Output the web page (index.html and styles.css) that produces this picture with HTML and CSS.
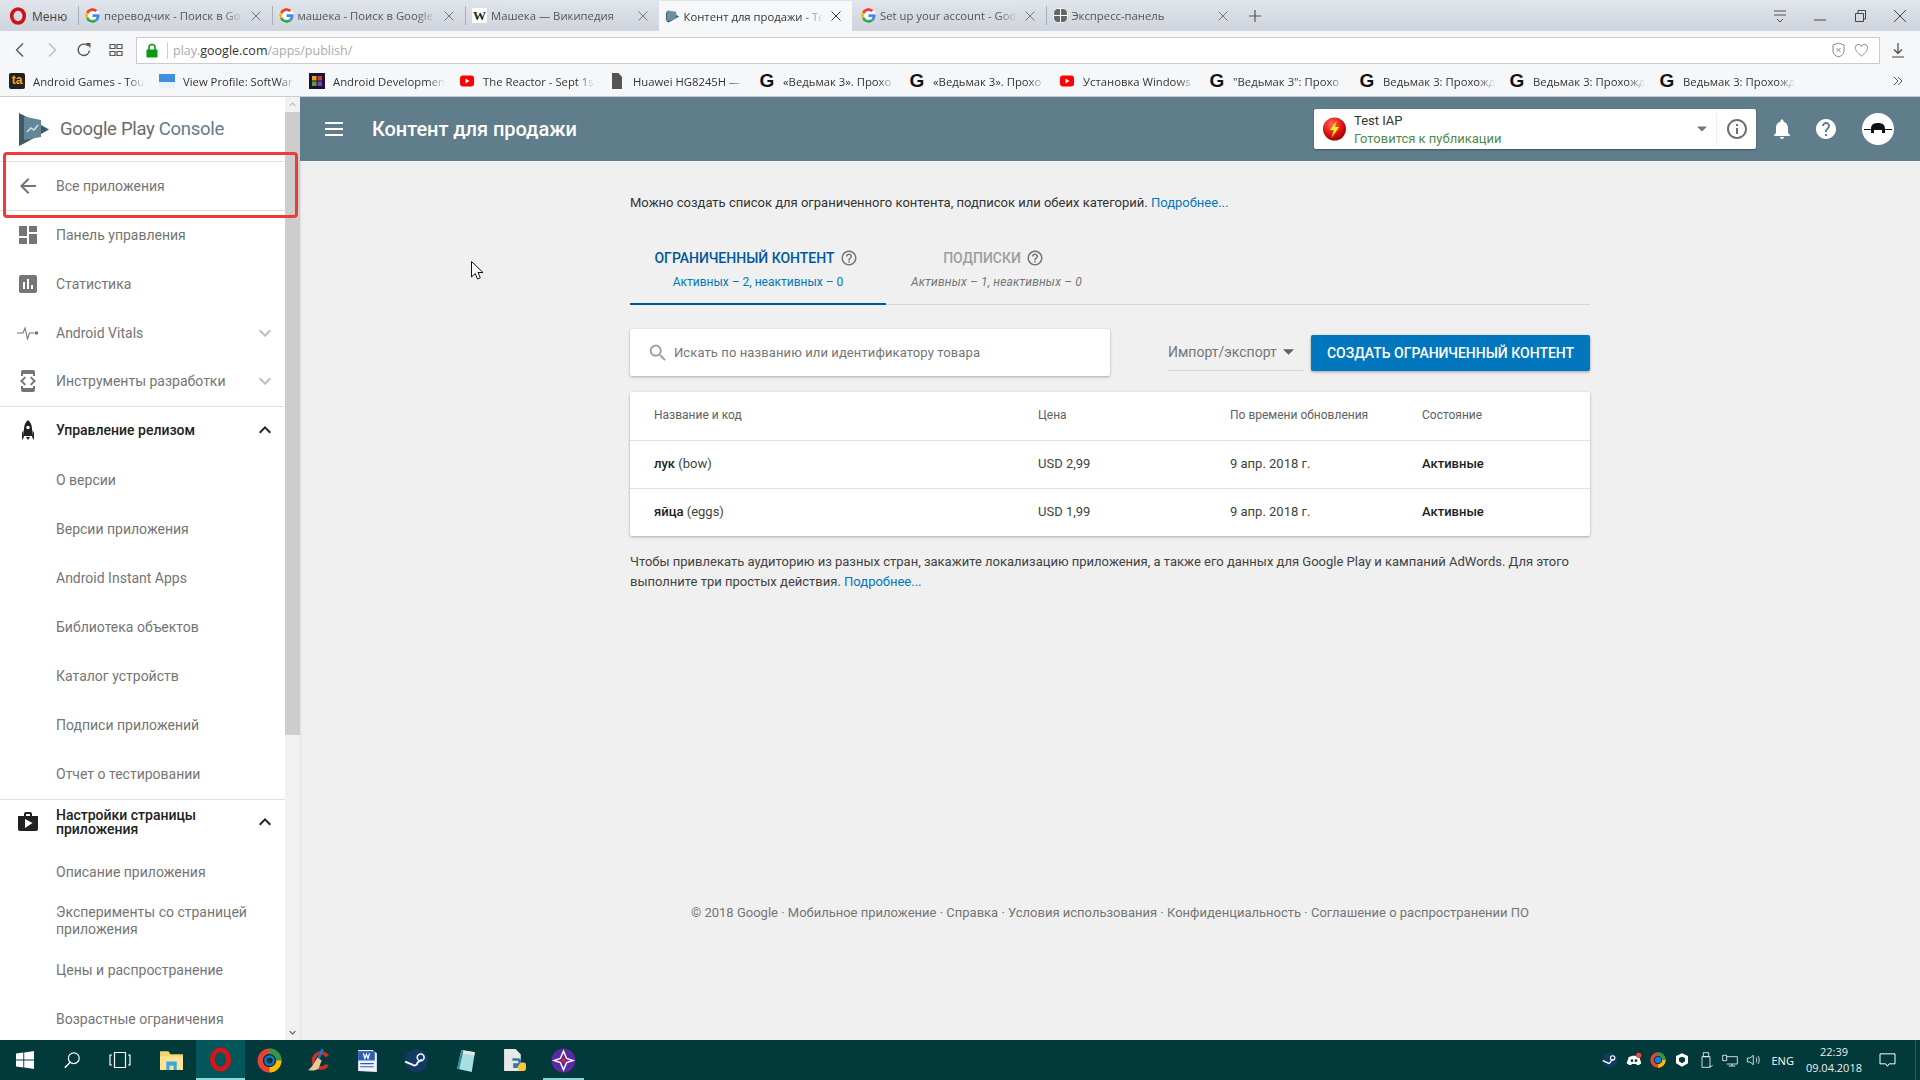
FILE: index.html
```html
<!DOCTYPE html>
<html lang="ru">
<head>
<meta charset="utf-8">
<title>Контент для продажи</title>
<link rel="stylesheet" href="styles.css">
</head>
<body>
<svg class="defs" aria-hidden="true">
  <symbol id="g" viewBox="0 0 48 48">
    <path fill="#EA4335" d="M24 9.5c3.54 0 6.71 1.22 9.21 3.6l6.85-6.85C35.9 2.38 30.47 0 24 0 14.62 0 6.51 5.38 2.56 13.22l7.98 6.19C12.43 13.72 17.74 9.5 24 9.5z"/>
    <path fill="#4285F4" d="M46.98 24.55c0-1.57-.15-3.09-.38-4.55H24v9.02h12.94c-.58 2.96-2.26 5.48-4.78 7.18l7.73 6c4.51-4.18 7.09-10.36 7.09-17.65z"/>
    <path fill="#FBBC05" d="M10.53 28.59c-.48-1.45-.76-2.99-.76-4.59s.27-3.14.76-4.59l-7.98-6.19C.92 16.46 0 20.12 0 24c0 3.88.92 7.54 2.56 10.78l7.97-6.19z"/>
    <path fill="#34A853" d="M24 48c6.48 0 11.93-2.13 15.89-5.81l-7.73-6c-2.15 1.45-4.92 2.3-8.16 2.3-6.26 0-11.57-4.22-13.47-9.91l-7.98 6.19C6.51 42.62 14.62 48 24 48z"/>
  </symbol>
  <symbol id="x" viewBox="0 0 12 12"><path d="M1.5 1.5l9 9M10.5 1.5l-9 9" fill="none" stroke="currentColor" stroke-width="1"/></symbol>
  <symbol id="yt" viewBox="0 0 16 16"><rect x="1" y="2.5" width="14" height="11" rx="3" fill="#f00"/><path d="M6.5 5.5l4 2.5-4 2.5z" fill="#fff"/></symbol>
  <symbol id="help-o" viewBox="0 0 24 24"><path fill="currentColor" d="M11 18h2v-2h-2v2zm1-16C6.48 2 2 6.48 2 12s4.48 10 10 10 10-4.48 10-10S17.52 2 12 2zm0 18c-4.41 0-8-3.59-8-8s3.59-8 8-8 8 3.59 8 8-3.59 8-8 8zm0-14c-2.21 0-4 1.79-4 4h2c0-1.1.9-2 2-2s2 .9 2 2c0 2-3 1.75-3 5h2c0-2.25 3-2.5 3-5 0-2.21-1.79-4-4-4z"/></symbol>
  <symbol id="more" viewBox="0 0 24 24"><path fill="currentColor" d="M16.59 8.59L12 13.17 7.41 8.59 6 10l6 6 6-6z"/></symbol>
  <symbol id="less" viewBox="0 0 24 24"><path fill="currentColor" d="M12 8l-6 6 1.41 1.41L12 10.83l4.59 4.58L18 14z"/></symbol>
  <symbol id="caret" viewBox="0 0 12 6"><path fill="currentColor" d="M0 0h12L6 6z"/></symbol>
</svg>

<div class="tabbar">
  <div class="menu">
    <svg class="opera-s" viewBox="0 0 16 16"><ellipse cx="8" cy="8" rx="5.6" ry="6.2" fill="none" stroke="#d0121b" stroke-width="3.2"/></svg>
    <span>Меню</span>
  </div>
  <div class="tab"><svg class="fav"><use href="#g"/></svg><span class="tab-l">переводчик - Поиск в Go</span><svg class="tab-x"><use href="#x"/></svg></div>
  <div class="tab"><svg class="fav"><use href="#g"/></svg><span class="tab-l">машека - Поиск в Google</span><svg class="tab-x"><use href="#x"/></svg></div>
  <div class="tab"><span class="wiki">W</span><span class="tab-l">Машека — Википедия</span><svg class="tab-x"><use href="#x"/></svg></div>
  <div class="tab active"><svg class="fav" viewBox="0 0 16 16"><path d="M1 0l14 8-14 8z" fill="#3e5866"/><path d="M2 1.500l10 1.500v7l-10 3z" fill="#6b8fa0"/></svg><span class="tab-l">Контент для продажи - Te</span><svg class="tab-x"><use href="#x"/></svg></div>
  <div class="tab after-active"><svg class="fav"><use href="#g"/></svg><span class="tab-l">Set up your account - Goo</span><svg class="tab-x"><use href="#x"/></svg></div>
  <div class="tab"><svg class="fav" viewBox="0 0 14 14"><path d="M1 1h5.5v5.5H1zM7.5 1H13v5.5H7.5zM1 7.5h5.5V13H1zM7.5 7.5H13V13H7.5z" fill="#666"/></svg><span class="tab-l">Экспресс-панель</span><svg class="tab-x"><use href="#x"/></svg></div>
  <svg class="plus" viewBox="0 0 12 12"><path d="M6 0v12M0 6h12" stroke="#555" stroke-width="1.2"/></svg>
  <div class="winctl">
    <svg class="wc" viewBox="0 0 14 14"><path d="M1 2h12M1 6h12M4 10l3 3 3-3" fill="none" stroke="#555"/></svg>
    <svg class="wc" viewBox="0 0 14 14"><path d="M1 11h12" stroke="#444"/></svg>
    <svg class="wc" viewBox="0 0 14 14"><path d="M2.5 4.5h8v8h-8zM5 4V1.5h7.5V10H11" fill="none" stroke="#444"/></svg>
    <svg class="wc" viewBox="0 0 14 14"><path d="M1 1l12 12M13 1L1 13" stroke="#444"/></svg>
  </div>
</div>

<div class="addr">
  <svg class="nav" viewBox="0 0 16 16"><path d="M11 1.500L4.500 8l6.500 6.500" fill="none" stroke="#555" stroke-width="1.300"/></svg>
  <svg class="nav" viewBox="0 0 16 16"><path d="M5 1.500L11.500 8 5 14.500" fill="none" stroke="#bbb" stroke-width="1.300"/></svg>
  <svg class="nav" viewBox="0 0 16 16"><path d="M13.500 8.500A5.700 5.700 0 1 1 11.800 3.700" fill="none" stroke="#555" stroke-width="1.400"/><path d="M9.500 1h5v5z" fill="#555"/></svg>
  <svg class="nav" viewBox="0 0 16 16"><path d="M2 2.500h5v4H2zM9 2.500h5v4H9zM2 9.500h5v4H2zM9 9.500h5v4H9z" fill="none" stroke="#555" stroke-width="1.200"/></svg>
  <div class="urlbox">
    <svg class="lock" viewBox="0 0 12 15"><path d="M3 7V4.500a3 3 0 0 1 6 0V7" fill="none" stroke="#0a9a12" stroke-width="1.600"/><rect x="0.500" y="6.500" width="11" height="8" fill="#0a9a12"/></svg>
    <span class="urlsep"></span>
    <span class="url">play.<b>google.com</b>/apps/publish/</span>
    <svg class="urli shield" viewBox="0 0 14 16"><path d="M7 1l5.500 2v6c0 3-2.500 5-5.500 6-3-1-5.500-3-5.500-6V3z" fill="none" stroke="#888"/><path d="M5 6l4 4M9 6l-4 4" stroke="#888"/></svg>
    <svg class="urli heart" viewBox="0 0 16 16"><path d="M8 14.500C3 10.500 1.500 8 1.500 5.500a3.300 3.300 0 0 1 6.500-1 3.300 3.300 0 0 1 6.500 1c0 2.500-1.500 5-6.500 9z" fill="none" stroke="#888"/></svg>
  </div>
  <svg class="dl" viewBox="0 0 14 16"><path d="M7 1v10M3 7.500l4 4 4-4M1 15h12" fill="none" stroke="#444" stroke-width="1.200"/></svg>
</div>

<div class="bookmarks">
  <div class="bm"><span class="ic-ta">ta</span><span class="bm-l">Android Games - Tou</span></div>
  <div class="bm"><svg class="bmi" viewBox="0 0 16 16"><rect y="1" width="16" height="14" fill="#3f8fe0"/><rect y="9" width="16" height="6" fill="#e8f2fb"/></svg><span class="bm-l">View Profile: SoftWar</span></div>
  <div class="bm"><svg class="bmi" viewBox="0 0 16 16"><rect width="16" height="16" fill="#14143c"/><rect x="3" y="3" width="4.500" height="4.500" fill="#e7a31e"/><rect x="8.500" y="3" width="4.500" height="4.500" fill="#d23a2b"/><rect x="3" y="8.500" width="4.500" height="4.500" fill="#5aa02c"/><rect x="8.500" y="8.500" width="4.500" height="4.500" fill="#7b3fb0"/></svg><span class="bm-l">Android Developmen</span></div>
  <div class="bm"><svg class="bmi"><use href="#yt"/></svg><span class="bm-l">The Reactor - Sept 1s</span></div>
  <div class="bm"><svg class="bmi" viewBox="0 0 16 16"><path d="M3 0h6.500L13 4v12H3z" fill="#555"/></svg><span class="bm-l">Huawei HG8245H —</span></div>
  <div class="bm"><span class="ic-g">G</span><span class="bm-l">«Ведьмак 3». Прохо</span></div>
  <div class="bm"><span class="ic-g">G</span><span class="bm-l">«Ведьмак 3». Прохо</span></div>
  <div class="bm"><svg class="bmi"><use href="#yt"/></svg><span class="bm-l">Установка Windows</span></div>
  <div class="bm"><span class="ic-g">G</span><span class="bm-l">"Ведьмак 3": Прохо</span></div>
  <div class="bm"><span class="ic-g">G</span><span class="bm-l">Ведьмак 3: Прохожд</span></div>
  <div class="bm"><span class="ic-g">G</span><span class="bm-l">Ведьмак 3: Прохожд</span></div>
  <div class="bm"><span class="ic-g">G</span><span class="bm-l">Ведьмак 3: Прохожд</span></div>
  <svg class="chev" viewBox="0 0 10 10"><path d="M1 1l4 4-4 4M5 1l4 4-4 4" fill="none" stroke="#555"/></svg>
</div>

<div class="app">
  <aside class="sidebar">
    <div class="logo">
      <svg class="logo-i" viewBox="0 0 30 33"><path d="M0 0l6 3 24 13.500L6 30l-6 3z" fill="#3e5866"/><path d="M5 3.500l17 3.500v17L5 27z" fill="#648797"/><path d="M8 19l4-4 3 2 4-5" fill="none" stroke="#d3e0e6" stroke-width="1.500"/></svg>
      <span class="logo-t">Google Play <em>Console</em></span>
    </div>
    <div class="row back">
      <svg class="ri" viewBox="0 0 24 24"><path fill="#757575" d="M20 11H7.830l5.590-5.590L12 4l-8 8 8 8 1.410-1.410L7.830 13H20v-2z"/></svg>
      <span class="rt">Все приложения</span>
    </div>
    <div class="row top">
      <svg class="ri" viewBox="0 0 24 24"><path fill="#757575" d="M3 13h8V3H3v10zm0 8h8v-6H3v6zm10 0h8V11h-8v10zm0-18v6h8V3h-8z"/></svg>
      <span class="rt">Панель управления</span>
    </div>
    <div class="row top">
      <svg class="ri" viewBox="0 0 24 24"><path fill="#757575" d="M19 3H5c-1.100 0-2 .9-2 2v14c0 1.100.9 2 2 2h14c1.100 0 2-.9 2-2V5c0-1.100-.9-2-2-2zM9 17H7v-7h2v7zm4 0h-2V7h2v10zm4 0h-2v-4h2v4z"/></svg>
      <span class="rt">Статистика</span>
    </div>
    <div class="row top">
      <svg class="ri" viewBox="0 0 24 24"><path d="M1 12h6l2-5 2.500 11 2-6h5" fill="none" stroke="#757575" stroke-width="1.100"/><circle cx="20.500" cy="12" r="1.800" fill="#757575"/></svg>
      <span class="rt">Android Vitals</span>
      <svg class="ra dim"><use href="#more"/></svg>
    </div>
    <div class="row top">
      <svg class="ri" viewBox="0 0 24 24"><path fill="#757575" d="M7 5h10v2h2V3c0-1.100-.9-1.990-2-1.990L7 1c-1.100 0-2 .9-2 2v4h2V5zm8.410 11.590L20 12l-4.590-4.590L14 8.830 17.170 12 14 15.170l1.410 1.420zM10 15.170L6.830 12 10 8.830 8.590 7.410 4 12l4.590 4.590L10 15.170zM17 19H7v-2H5v4c0 1.100.9 2 2 2h10c1.100 0 2-.9 2-2v-4h-2v2z"/></svg>
      <span class="rt">Инструменты разработки</span>
      <svg class="ra dim"><use href="#more"/></svg>
    </div>
    <div class="row group release">
      <svg class="ri" viewBox="0 0 24 24"><path fill="#212121" d="M12 2c3 2.500 4 6 4 9v7H8v-7c0-3 1-6.500 4-9zM7.500 12L6 15v7l2-3zM16.500 12L18 15v7l-2-3zM10 19h4l-2 3z"/><circle cx="12" cy="9.500" r="1.700" fill="#fff"/></svg>
      <span class="rt">Управление релизом</span>
      <svg class="ra"><use href="#less"/></svg>
    </div>
    <div class="row sub"><span class="rt">О версии</span></div>
    <div class="row sub"><span class="rt">Версии приложения</span></div>
    <div class="row sub"><span class="rt">Android Instant Apps</span></div>
    <div class="row sub"><span class="rt">Библиотека объектов</span></div>
    <div class="row sub"><span class="rt">Каталог устройств</span></div>
    <div class="row sub"><span class="rt">Подписи приложений</span></div>
    <div class="row sub"><span class="rt">Отчет о тестировании</span></div>
    <div class="row group store">
      <svg class="ri" viewBox="0 0 24 24"><path fill="#212121" d="M16 6V4c0-1.110-.89-2-2-2h-4c-1.110 0-2 .89-2 2v2H2v13c0 1.110.89 2 2 2h16c1.110 0 2-.89 2-2V6h-6zm-6-2h4v2h-4V4zM9 18V9l7.500 4L9 18z"/></svg>
      <span class="rt tight">Настройки страницы приложения</span>
      <svg class="ra"><use href="#less"/></svg>
    </div>
    <div class="row sub"><span class="rt">Описание приложения</span></div>
    <div class="row sub exp"><span class="rt">Эксперименты со страницей приложения</span></div>
    <div class="row sub"><span class="rt">Цены и распространение</span></div>
    <div class="row sub"><span class="rt">Возрастные ограничения</span></div>
  </aside>
  <div class="scrollbar">
    <div class="sb-btn"><svg class="sb-a"><use href="#less"/></svg></div>
    <div class="sb-thumb"></div>
    <div class="sb-track"></div>
    <div class="sb-btn"><svg class="sb-a dark"><use href="#more"/></svg></div>
  </div>
  <div class="content">
    <header class="head">
      <svg class="burger" viewBox="0 0 18 14"><path d="M0 1h18M0 7h18M0 13h18" stroke="#fff" stroke-width="2"/></svg>
      <h1 class="title">Контент для продажи</h1>
      <div class="appsel">
        <svg class="ball" viewBox="0 0 24 24"><defs><radialGradient id="rb" cx="40%" cy="30%" r="75%"><stop offset="0" stop-color="#ff6a5a"/><stop offset="0.6" stop-color="#e01010"/><stop offset="1" stop-color="#8a0808"/></radialGradient></defs><circle cx="12" cy="12" r="12" fill="url(#rb)"/><path d="M14.500 3L7 13h4l-2 8 8-11h-4.500z" fill="#ffe81a"/></svg>
        <div class="appname"><span class="an1">Test IAP</span><span class="an2">Готовится к публикации</span></div>
        <svg class="sel-c"><use href="#caret"/></svg>
        <span class="sel-d"></span>
        <svg class="sel-i" viewBox="0 0 24 24"><path fill="#6d6d6d" d="M11 17h2v-6h-2v6zm1-15C6.480 2 2 6.480 2 12s4.480 10 10 10 10-4.480 10-10S17.520 2 12 2zm0 18c-4.410 0-8-3.590-8-8s3.590-8 8-8 8 3.590 8 8-3.590 8-8 8zM11 9h2V7h-2v2z"/></svg>
      </div>
      <svg class="hi bell" viewBox="0 0 24 24"><path fill="#fff" d="M12 22c1.100 0 2-.9 2-2h-4c0 1.100.89 2 2 2zm6-6v-5c0-3.070-1.640-5.640-4.500-6.320V4c0-.83-.67-1.500-1.500-1.500s-1.500.67-1.500 1.500v.68C7.630 5.360 6 7.920 6 11v5l-2 2v1h16v-1l-2-2z"/></svg>
      <svg class="hi helpf" viewBox="0 0 24 24"><path fill="#fff" d="M12 2C6.480 2 2 6.480 2 12s4.480 10 10 10 10-4.480 10-10S17.520 2 12 2zm1 17h-2v-2h2v2zm2.070-7.750l-.9.920C13.450 12.900 13 13.500 13 15h-2v-.5c0-1.100.45-2.100 1.170-2.830l1.240-1.260c.37-.36.59-.86.59-1.410 0-1.100-.9-2-2-2s-2 .9-2 2H8c0-2.210 1.790-4 4-4s4 1.790 4 4c0 .88-.36 1.680-.93 2.250z"/></svg>
      <svg class="avatar" viewBox="0 0 32 32"><circle cx="16" cy="16" r="16" fill="#fff"/><path d="M2 16.500h7M23 16.500h7" stroke="#111"/><path d="M9 20v-4c0-4 2-6 7-6s7 2 7 6v4h-3v-3h-8v3z" fill="#111"/></svg>
    </header>
    <main class="main">
      <p class="intro">Можно создать список для ограниченного контента, подписок или обеих категорий. <a class="lnk">Подробнее...</a></p>
      <div class="tabs">
        <div class="ptab on">
          <div class="pt"><span>ОГРАНИЧЕННЫЙ КОНТЕНТ</span><svg class="q"><use href="#help-o"/></svg></div>
          <div class="ps">Активных – 2, неактивных – 0</div>
        </div>
        <div class="ptab off">
          <div class="pt"><span>ПОДПИСКИ</span><svg class="q"><use href="#help-o"/></svg></div>
          <div class="ps">Активных – 1, неактивных – 0</div>
        </div>
      </div>
      <div class="tools">
        <div class="search">
          <svg class="si" viewBox="0 0 24 24"><path fill="#9e9e9e" d="M15.500 14h-.79l-.28-.27C15.410 12.590 16 11.110 16 9.500 16 5.910 13.090 3 9.500 3S3 5.910 3 9.500 5.910 16 9.500 16c1.610 0 3.090-.59 4.230-1.570l.27.28v.79l5 4.990L20.490 19l-4.990-5zm-6 0C7.010 14 5 11.990 5 9.500S7.010 5 9.500 5 14 7.010 14 9.500 11.990 14 9.500 14z"/></svg>
          <span>Искать по названию или идентификатору товара</span>
        </div>
        <div class="imp"><span>Импорт/экспорт</span><svg class="imp-c"><use href="#caret"/></svg></div>
        <div class="btn">СОЗДАТЬ ОГРАНИЧЕННЫЙ КОНТЕНТ</div>
      </div>
      <div class="table">
        <div class="tr th"><span>Название и код</span><span>Цена</span><span>По времени обновления</span><span>Состояние</span></div>
        <div class="tr"><span><b>лук</b> (bow)</span><span>USD 2,99</span><span>9 апр. 2018 г.</span><b>Активные</b></div>
        <div class="tr"><span><b>яйца</b> (eggs)</span><span>USD 1,99</span><span>9 апр. 2018 г.</span><b>Активные</b></div>
      </div>
      <p class="note">Чтобы привлекать аудиторию из разных стран, закажите локализацию приложения, а также его данных для Google Play и кампаний AdWords. Для этого выполните три простых действия. <a class="lnk">Подробнее...</a></p>
      <footer class="foot">© 2018 Google · Мобильное приложение · Справка · Условия использования · Конфиденциальность · Соглашение о распространении ПО</footer>
    </main>
  </div>
</div>

<div class="taskbar">
  <div class="tb"><svg class="tbi win" viewBox="0 0 16 16"><path fill="#fff" d="M0 2.300l6.500-.9v6.200H0zM7.300 1.300L16 0v7.600H7.300zM0 8.400h6.500v6.200L0 13.700zM7.300 8.400H16V16l-8.700-1.300z"/></svg></div>
  <div class="tb"><svg class="tbi shift" viewBox="0 0 20 20"><circle cx="12" cy="8" r="6" fill="none" stroke="#fff" stroke-width="1.300"/><path d="M8 12.500l-6 6" stroke="#fff" stroke-width="1.600"/></svg></div>
  <div class="tb"><svg class="tbi shift wide" viewBox="0 0 22 18"><path d="M5.500 1.500h11v15h-11zM3 4H1v10h2M19 4h2v10h-2" fill="none" stroke="#fff" stroke-width="1.200"/></svg></div>
  <div class="tb"><svg class="tbl" viewBox="0 0 24 22"><path d="M1 2h8l2 3h12v15H1z" fill="#f6d36b"/><path d="M1 7h22v13H1z" fill="#ffe394"/><path d="M7 12h10v8h-3v-4h-4v4H7z" fill="#3aa7e0"/></svg></div>
  <div class="tb cur"><svg class="tbl" viewBox="0 0 24 26"><ellipse cx="12" cy="13" rx="8.500" ry="10" fill="none" stroke="#d6141c" stroke-width="5"/></svg></div>
  <div class="tb"><svg class="tbl" viewBox="0 0 24 24"><circle cx="12" cy="12" r="9" fill="none" stroke="#ea4335" stroke-width="5"/><path d="M12 3a9 9 0 0 1 9 9" fill="none" stroke="#2a9d46" stroke-width="5"/><path d="M21 12a9 9 0 0 1-9 9" fill="none" stroke="#fbbc05" stroke-width="5"/><circle cx="12" cy="12" r="5" fill="#1976d2"/><circle cx="12" cy="12" r="3" fill="#023a3c"/></svg></div>
  <div class="tb"><svg class="tbl" viewBox="0 0 24 24"><path d="M22 7a9 9 0 1 0 0 10l-3-2a5.500 5.500 0 1 1 0-6z" fill="#c8302a"/><path d="M16 1l-4 9" stroke="#2a6fc0" stroke-width="2.500"/><path d="M11 9l4 3-3 8c-3 2-7 2-10 1 3-2 5-5 9-12z" fill="#e8c79a"/></svg></div>
  <div class="tb"><svg class="tbl" viewBox="0 0 24 24"><path d="M3 2h14l4 3v18l-18-1z" fill="#eef3fb"/><path d="M3 3h16v9H3z" fill="#2b5fb8"/><path d="M5 15h13M5 18h13" stroke="#2b5fb8"/><path d="M8 5l1.500 5 1.500-4 1.500 4 1.500-5" fill="none" stroke="#fff" stroke-width="1.200"/></svg></div>
  <div class="tb"><svg class="tbl" viewBox="0 0 24 24"><circle cx="12" cy="12" r="11" fill="#123a63"/><path d="M1 13l7 3a3 3 0 0 0 5-2l4-3" fill="none" stroke="#fff" stroke-width="1.800"/><circle cx="16" cy="9" r="3.300" fill="none" stroke="#fff" stroke-width="1.500"/></svg></div>
  <div class="tb"><svg class="tbl" viewBox="0 0 24 24"><path d="M8 2l13 2-3 19-14-3z" fill="#a9dfe3"/><path d="M8 2l13 2-.6 3-13-2z" fill="#e8e8e0"/><path d="M4 20L8 2l2 .3L6 20.500z" fill="#2f8b98"/></svg></div>
  <div class="tb"><svg class="tbl" viewBox="0 0 24 24"><path d="M2 1h11l5 5v16H2z" fill="#e8e8e8"/><path d="M10 11h5a2 2 0 0 1 2 2v3h-5v2h5" fill="none" stroke="#3775a8" stroke-width="2.500"/><path d="M18 14h3a2 2 0 0 1 2 2v4a2 2 0 0 1-2 2h-4a2 2 0 0 1-2-2v-2" fill="#f8c83a"/></svg></div>
  <div class="tb lit"><svg class="tbl" viewBox="0 0 24 24"><circle cx="12" cy="12" r="11.500" fill="#5a2aa0"/><path d="M12 3l3 7 6 2-6 2-3 7-3-7-6-2 6-2z" fill="none" stroke="#fff" stroke-width="1.400"/><circle cx="12" cy="12" r="2" fill="#d9253c"/></svg></div>
  <div class="tray">
    <svg class="tri" viewBox="0 0 24 24"><circle cx="12" cy="12" r="11" fill="#123a63"/><path d="M1 13l7 3a3 3 0 0 0 5-2l4-3" fill="none" stroke="#fff" stroke-width="2"/><circle cx="16" cy="9" r="3.300" fill="none" stroke="#fff" stroke-width="1.600"/></svg>
    <svg class="tri" viewBox="0 0 24 24"><path d="M4 8c5-3 11-3 16 0l3 9c-2 2-4 3-6 3l-2-2H9l-2 2c-2 0-4-1-6-3z" fill="#fff"/><circle cx="9" cy="13" r="2" fill="#023a3c"/><circle cx="15" cy="13" r="2" fill="#023a3c"/><circle cx="19" cy="5" r="4" fill="#f04747"/></svg>
    <svg class="tri" viewBox="0 0 24 24"><circle cx="12" cy="12" r="9" fill="none" stroke="#ea4335" stroke-width="5"/><path d="M12 3a9 9 0 0 1 9 9" fill="none" stroke="#2a9d46" stroke-width="5"/><path d="M21 12a9 9 0 0 1-9 9" fill="none" stroke="#fbbc05" stroke-width="5"/><circle cx="12" cy="12" r="5" fill="#1976d2"/></svg>
    <svg class="tri" viewBox="0 0 24 24"><path d="M12 2l9 4v11l-9 5-9-5V6z" fill="#fff"/><path d="M12 7l4.500 2v5L12 17l-4.500-3V9z" fill="#023a3c"/></svg>
    <svg class="tri" viewBox="0 0 24 24"><path d="M8 1h8v6H8zM6 7h12v16H6zM17 21l2 1.500 3-3" fill="none" stroke="#fff" stroke-width="1.200"/></svg>
    <svg class="tri" viewBox="0 0 24 24"><path d="M1 5h6v8H1zM7 7h16v11H7M15 18v3M10 21h10" fill="none" stroke="#fff" stroke-width="1.200"/></svg>
    <svg class="tri" viewBox="0 0 24 24"><path d="M2 9h4l5-4v14l-5-4H2zM15 8c1.500 2 1.500 6 0 8M18 6c2.500 3 2.500 9 0 12" fill="none" stroke="#fff" stroke-width="1.200"/></svg>
    <span class="eng">ENG</span>
    <div class="clock"><span>22:39</span><span>09.04.2018</span></div>
    <svg class="notif" viewBox="0 0 20 18"><path d="M1 1h18v12h-7l-2 3-2-3H1z" fill="none" stroke="#fff" stroke-width="1.200"/></svg>
    <span class="showdesk"></span>
  </div>
</div>

<div class="redbox"></div>
<svg class="cursor" viewBox="0 0 13 20"><path d="M.5.5v15.500l3.700-3.500 2.300 5.500 2.800-1.200-2.300-5.300h5z" fill="#fff" stroke="#111"/></svg>
</body>
</html>
```

FILE: styles.css
```css
* { box-sizing: border-box; }
html, body { margin: 0; height: 100%; }
body {
  width: 1920px; height: 1080px; overflow: hidden;
  display: flex; flex-direction: column;
  font-family: Roboto, "Noto Sans", sans-serif; color: #212121; background: #f0f0f0;
}
.defs { position: absolute; width: 0; height: 0; }

/* Browser chrome */
.tabbar {
  height: 31px; flex: none; display: flex; align-items: stretch;
  background: linear-gradient(#e1e5ec, #ced3dc);
  font-family: "Open Sans", sans-serif; font-size: 11.300px; color: #555;
}
.menu { width: 78px; display: flex; align-items: center; gap: 5px; padding-left: 9px; padding-top: 1px; color: #444; font-size: 12px; }
.opera-s { width: 18px; height: 18px; }
.tab {
  width: 193.500px; display: flex; align-items: center; padding: 0 10px 0 6px; position: relative;
  border-left: 1px solid #a9afb9; border-image: linear-gradient(transparent 22%, #a9afb9 22%, #a9afb9 78%, transparent 78%) 1;
}
.tab.active, .tab.after-active { border-left: 0; border-image: none; }
.tab.after-active { padding-left: 9px; }
.tab.active { background: #f6f7f9; color: #333; margin-top: 1px; }
.fav { width: 15px; height: 15px; flex: none; background: #fff; border-radius: 50%; }
.tab.active .fav { background: none; }
.tab:last-of-type .fav { background: none; }
.wiki { width: 15px; height: 15px; flex: none; background: #fff; font: 700 13px/15px "Liberation Serif", serif; color: #222; text-align: center; }
.tab-l {
  flex: 1; margin-left: 4px; white-space: nowrap; overflow: hidden;
  -webkit-mask-image: linear-gradient(90deg, #000 85%, transparent);
  mask-image: linear-gradient(90deg, #000 85%, transparent);
}
.tab-x { width: 12px; height: 12px; margin-left: 6px; flex: none; color: #777; }
.tab.active .tab-x { color: #333; }
.plus { width: 12px; height: 12px; align-self: center; margin-left: 10px; }
.winctl { margin-left: auto; display: flex; align-items: center; gap: 26px; padding-right: 13px; }
.wc { width: 14px; height: 14px; }
.addr {
  height: 34px; flex: none; display: flex; align-items: center; background: #f6f7f9; padding: 4px 0 0 12px;
}
.nav { width: 16px; height: 16px; margin-right: 16px; flex: none; }
.urlbox {
  width: 1744px; height: 27px; margin-left: -4px; background: #fff; border: 1px solid #c8ccd2;
  display: flex; align-items: center; padding-left: 9px; font-family: "Open Sans", sans-serif; font-size: 12.500px; color: #aaa;
}
.lock { width: 12px; height: 15px; flex: none; }
.urlsep { width: 1px; height: 17px; background: #ccc; margin: 0 5px 0 9px; }
.url b { font-weight: 400; color: #333; }
.urli { width: 15px; height: 16px; flex: none; }
.shield { margin-left: auto; }
.heart { margin: 0 10px 0 8px; }
.dl { width: 14px; height: 16px; margin-left: 11px; }
.bookmarks {
  height: 32px; flex: none; background: #f6f7f9; display: flex; align-items: center; padding: 1px 0 0 9px;
  border-bottom: 1px solid #c8ccd2; font-family: "Open Sans", sans-serif; font-size: 11.300px; color: #333;
}
.bm { width: 150px; flex: none; display: flex; align-items: center; gap: 8px; }
.bmi { width: 16px; height: 16px; flex: none; }
.ic-ta { width: 16px; height: 16px; flex: none; background: #222; color: #f6a81c; font: 700 12px/15px "Liberation Sans", sans-serif; text-align: center; border-radius: 2px; }
.ic-g { width: 16px; height: 18px; flex: none; font: 700 19px/18px "Liberation Sans", sans-serif; color: #111; text-align: center; }
.bm-l {
  width: 112px; white-space: nowrap; overflow: hidden;
  -webkit-mask-image: linear-gradient(90deg, #000 85%, transparent);
  mask-image: linear-gradient(90deg, #000 85%, transparent);
}
.chev { width: 10px; height: 10px; margin-left: 84px; }

/* App */
.app { flex: 1; min-height: 0; display: flex; }
.sidebar { width: 285px; flex: none; background: #fff; overflow: hidden; font-size: 14px; color: #757575; }
.logo { height: 64px; display: flex; align-items: center; padding-left: 19px; gap: 11px; }
.logo-i { width: 30px; height: 33px; flex: none; }
.logo-t { font-size: 18.500px; letter-spacing: -.3px; color: #6a6a6a; white-space: nowrap; }
.logo-t em { font-style: normal; color: #607d8b; }
.row { display: flex; align-items: center; padding: 0 20px 0 56px; position: relative; }
.ri { position: absolute; left: 16px; width: 24px; height: 24px; }
.ra { width: 24px; height: 24px; margin-left: auto; margin-right: -12px; flex: none; color: #212121; }
.ra.dim { color: #bdbdbd; }
.rt { display: block; }
.back { height: 50px; border-top: 1px solid #e0e0e0; border-bottom: 1px solid #e0e0e0; }
.top { height: 48.700px; }
.group { color: #212121; font-weight: 500; border-top: 1px solid #e0e0e0; }
.release { height: 50.700px; padding-bottom: 3px; }
.store { height: 49px; padding-bottom: 4px; }
.tight { line-height: 14px; width: 180px; }
.sub { height: 49px; line-height: 17px; }
.sub .rt { max-width: 210px; }
.exp { padding-bottom: 2px; }
.scrollbar { width: 15px; flex: none; display: flex; flex-direction: column; background: #f1f1f1; }
.sb-btn { height: 15px; flex: none; display: flex; align-items: center; justify-content: center; }
.sb-a { width: 13px; height: 13px; color: #bbb; }
.sb-a.dark { color: #555; }
.sb-thumb { height: 623px; flex: none; background: #cdcdcd; }
.sb-track { flex: 1; }
.content { flex: 1; min-width: 0; display: flex; flex-direction: column; box-shadow: inset 2px 0 2px -1px rgba(0,0,0,.08); }
.head { height: 64px; flex: none; background: #607d8b; display: flex; align-items: center; padding-left: 25px; color: #fff; }
.burger { width: 18px; height: 14px; flex: none; }
.title { margin: 0 0 0 29px; font-size: 20px; font-weight: 500; line-height: 24px; letter-spacing: -.05px; }
.appsel {
  width: 442px; height: 40px; margin-left: auto; background: #fff; border-radius: 2px;
  display: flex; align-items: center; padding-left: 9px; box-shadow: 0 1px 2px rgba(0,0,0,.3);
}
.ball { width: 23px; height: 26px; flex: none; }
.appname { display: flex; flex-direction: column; margin-left: 8px; padding-top: 1px; font-size: 13px; line-height: 18px; }
.an1 { color: #333; }
.an2 { color: #4c8c4a; }
.sel-c { width: 10px; height: 6px; margin-left: auto; color: #757575; }
.sel-d { width: 1px; height: 32px; background: #eee; margin: 0 8px 0 9px; }
.sel-i { width: 24px; height: 24px; flex: none; margin-right: 7px; }
.hi { width: 24px; height: 24px; flex: none; }
.bell { margin-left: 14px; }
.helpf { margin-left: 20px; }
.avatar { width: 32px; height: 32px; flex: none; margin: 0 26px 0 24px; }

.main { flex: 1; padding: 0 330px; font-size: 13px; color: #424242; }
.intro { margin: 32px 0 0; line-height: 20px; color: #333; }
.lnk { color: #0277bd; }
.tabs { margin-top: 31px; height: 61px; display: flex; border-bottom: 1px solid #d6d6d6; }
.ptab { height: 60px; padding-top: 4px; text-align: center; }
.ptab.on { width: 256px; box-shadow: inset 0 -1px 0 #01579b, 0 1px 0 #01579b; }
.ptab.off { width: 221px; }
.pt { display: flex; align-items: center; justify-content: center; gap: 5px; height: 20px; padding-right: 4px; font-size: 14px; font-weight: 500; color: #01579b; }
.off .pt { color: #9e9e9e; padding-right: 6px; }
.q { width: 18px; height: 18px; color: #757575; }
.ps { margin-top: 5px; line-height: 18px; font-size: 12px; color: #0277bd; }
.off .ps { font-style: italic; color: #757575; letter-spacing: .17px; }
.tools { margin-top: 24px; height: 47px; display: flex; align-items: center; }
.search {
  width: 480px; height: 47px; background: #fff; border-radius: 2px; box-shadow: 0 1px 3px rgba(0,0,0,.3);
  display: flex; align-items: center; padding-left: 17px; color: #757575; letter-spacing: .1px;
}
.si { width: 22px; height: 22px; margin-right: 5px; flex: none; }
.imp {
  width: 135px; height: 36px; margin-left: auto; border-bottom: 1px solid #d6d6d6;
  display: flex; align-items: center; font-size: 14px; color: #757575;
}
.imp-c { width: 11px; height: 6px; margin-left: auto; margin-right: 9px; color: #616161; }
.btn {
  width: 279px; height: 36px; margin-left: 8px; background: #0277bd; color: #fff; border-radius: 2px;
  display: flex; align-items: center; justify-content: center; font-size: 14px; font-weight: 500; box-shadow: 0 1px 3px rgba(0,0,0,.35);
}
.table { margin-top: 16px; background: #fff; border-radius: 2px; box-shadow: 0 1px 3px rgba(0,0,0,.3); }
.tr {
  height: 48px; display: grid; grid-template-columns: 384px 192px 192px 168px; align-items: center; padding: 0 0 2px 24px;
  border-top: 1px solid #e0e0e0;
}
.tr:first-child { border-top: 0; }
.th { font-size: 12px; color: #616161; }
.tr b { font-weight: 500; color: #212121; }
.note { margin: 16px 0 0; line-height: 20px; }
.foot { margin-top: 311px; line-height: 20px; text-align: center; color: #757575; }

/* Taskbar */
.taskbar { height: 40px; flex: none; background: #023a3c; display: flex; align-items: center; }
.tb { width: 49px; height: 40px; flex: none; display: flex; align-items: center; justify-content: center; }
.tb.cur { background: #03565a; border-bottom: 2px solid #8ad8d8; }
.tb.lit { position: relative; }
.tb.lit::after { content: ""; position: absolute; left: 4px; right: 4px; bottom: 0; height: 2px; background: #8ad8d8; }
.tbi { width: 18px; height: 18px; }
.tbi.shift { margin-right: 3px; }
.tbi.wide { margin-right: 5px; width: 22px; }
.tbl { width: 25px; height: 25px; }
.tray { flex: 1; display: flex; align-items: center; justify-content: flex-end; color: #fff; }
.tri { width: 16px; height: 16px; margin-right: 8px; }
.eng { font-size: 11px; margin: 0 12px 0 1px; font-family: "Open Sans", sans-serif; }
.clock { display: flex; flex-direction: column; align-items: center; font-family: "Open Sans", sans-serif; font-size: 11px; line-height: 16px; color: #e8f0f0; }
.notif { width: 17px; height: 15px; margin-left: 17px; }
.showdesk { width: 1px; height: 40px; background: #2c5c5e; margin: 0 4px 0 19px; }

/* Overlays */
.redbox { position: absolute; left: 3px; top: 152px; width: 295px; height: 66px; border: 3px solid #ee3a3a; border-radius: 4px; }
.cursor { position: absolute; left: 471px; top: 261px; width: 13px; height: 20px; }
```
